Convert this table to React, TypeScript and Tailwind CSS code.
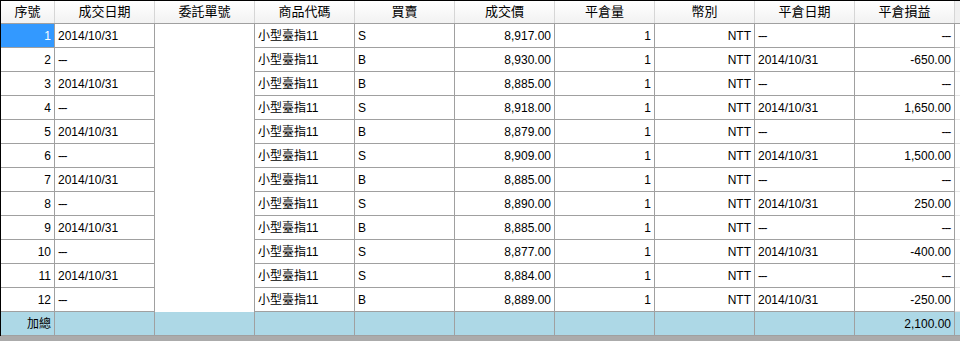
import React from 'react';

type Row = {
    no: number;
    date: string;
    code: string;
    side: string;
    price: string;
    qty: string;
    cur: string;
    closeDate: string;
    pnl: string;
};

const rows: Row[] = [
    { no: 1, date: '2014/10/31', code: '小型臺指11', side: 'S', price: '8,917.00', qty: '1', cur: 'NTT', closeDate: '---', pnl: '---' },
    { no: 2, date: '---', code: '小型臺指11', side: 'B', price: '8,930.00', qty: '1', cur: 'NTT', closeDate: '2014/10/31', pnl: '-650.00' },
    { no: 3, date: '2014/10/31', code: '小型臺指11', side: 'B', price: '8,885.00', qty: '1', cur: 'NTT', closeDate: '---', pnl: '---' },
    { no: 4, date: '---', code: '小型臺指11', side: 'S', price: '8,918.00', qty: '1', cur: 'NTT', closeDate: '2014/10/31', pnl: '1,650.00' },
    { no: 5, date: '2014/10/31', code: '小型臺指11', side: 'B', price: '8,879.00', qty: '1', cur: 'NTT', closeDate: '---', pnl: '---' },
    { no: 6, date: '---', code: '小型臺指11', side: 'S', price: '8,909.00', qty: '1', cur: 'NTT', closeDate: '2014/10/31', pnl: '1,500.00' },
    { no: 7, date: '2014/10/31', code: '小型臺指11', side: 'B', price: '8,885.00', qty: '1', cur: 'NTT', closeDate: '---', pnl: '---' },
    { no: 8, date: '---', code: '小型臺指11', side: 'S', price: '8,890.00', qty: '1', cur: 'NTT', closeDate: '2014/10/31', pnl: '250.00' },
    { no: 9, date: '2014/10/31', code: '小型臺指11', side: 'B', price: '8,885.00', qty: '1', cur: 'NTT', closeDate: '---', pnl: '---' },
    { no: 10, date: '---', code: '小型臺指11', side: 'S', price: '8,877.00', qty: '1', cur: 'NTT', closeDate: '2014/10/31', pnl: '-400.00' },
    { no: 11, date: '2014/10/31', code: '小型臺指11', side: 'S', price: '8,884.00', qty: '1', cur: 'NTT', closeDate: '---', pnl: '---' },
    { no: 12, date: '---', code: '小型臺指11', side: 'B', price: '8,889.00', qty: '1', cur: 'NTT', closeDate: '2014/10/31', pnl: '-250.00' },
];

const headers = ['成交日期', '委託單號', '商品代碼', '買賣', '成交價', '平倉量', '幣別', '平倉日期', '平倉損益'];

const cell = 'w-[100px] shrink-0 h-full border-r border-[#a0a0a0] flex items-center overflow-hidden whitespace-nowrap';
const left = cell + ' justify-start pl-[3px]';
const right = cell + ' justify-end pr-[3px]';

// the grid's font draws "---" as one joined line
const Val = ({ v }: { v: string }) =>
    v === '---' ? <span className="tracking-[-1.2px] pr-[1px]">{v}</span> : <>{v}</>;

export default function App() {
    return (
        <div
            className="w-[960px] h-[341px] bg-[#ababab] overflow-hidden text-[12px] text-black"
            style={{ fontFamily: '"Liberation Sans", Arial, "Noto Sans CJK TC", sans-serif' }}
        >
            <div className="border-t border-l border-black">
                {/* header */}
                <div className="flex h-[23px] border-b border-[#a0a0a0] bg-gradient-to-b from-white to-[#f2f2f2] text-[13px]">
                    <div className="w-[54px] shrink-0 border-r border-[#d6d6d6] flex items-center justify-center">序號</div>
                    {headers.map((h) => (
                        <div key={h} className="w-[100px] shrink-0 border-r border-[#d6d6d6] flex items-center justify-center">
                            {h}
                        </div>
                    ))}
                    <div className="flex-1 bg-[#f0f0f0]"></div>
                </div>

                {rows.map((r) => (
                    <div key={r.no} className="flex h-[24px] bg-white">
                        <div
                            className={
                                'w-[54px] shrink-0 border-r border-b border-[#a0a0a0] flex items-center justify-end pr-[3px] ' +
                                (r.no === 1 ? 'bg-[#3399ff] text-white' : '')
                            }
                        >
                            {r.no}
                        </div>
                        <div className={left + ' border-b'}><Val v={r.date} /></div>
                        <div className={cell}></div>
                        <div className={left + ' border-b'}>{r.code}</div>
                        <div className={left + ' border-b'}>{r.side}</div>
                        <div className={right + ' border-b'}>{r.price}</div>
                        <div className={right + ' border-b'}>{r.qty}</div>
                        <div className={right + ' border-b'}>{r.cur}</div>
                        <div className={left + ' border-b'}><Val v={r.closeDate} /></div>
                        <div className={right + ' border-b'}><Val v={r.pnl} /></div>
                        <div className="flex-1 border-b border-[#e4e4e4]"></div>
                    </div>
                ))}

                {/* total */}
                <div className="flex h-[24px] bg-[#add8e6]">
                    <div className="w-[54px] shrink-0 border-r border-b border-[#a0a0a0] flex items-center justify-end pr-[3px]">加總</div>
                    <div className={cell + ' border-b'}></div>
                    <div className={cell + ' border-b'}></div>
                    <div className={cell + ' border-b'}></div>
                    <div className={cell + ' border-b'}></div>
                    <div className={cell + ' border-b'}></div>
                    <div className={cell + ' border-b'}></div>
                    <div className={cell + ' border-b'}></div>
                    <div className={cell + ' border-b'}></div>
                    <div className={right + ' border-b'}>2,100.00</div>
                    <div className="flex-1 border-b border-[#a0a0a0]"></div>
                </div>
            </div>
        </div>
    );
}
